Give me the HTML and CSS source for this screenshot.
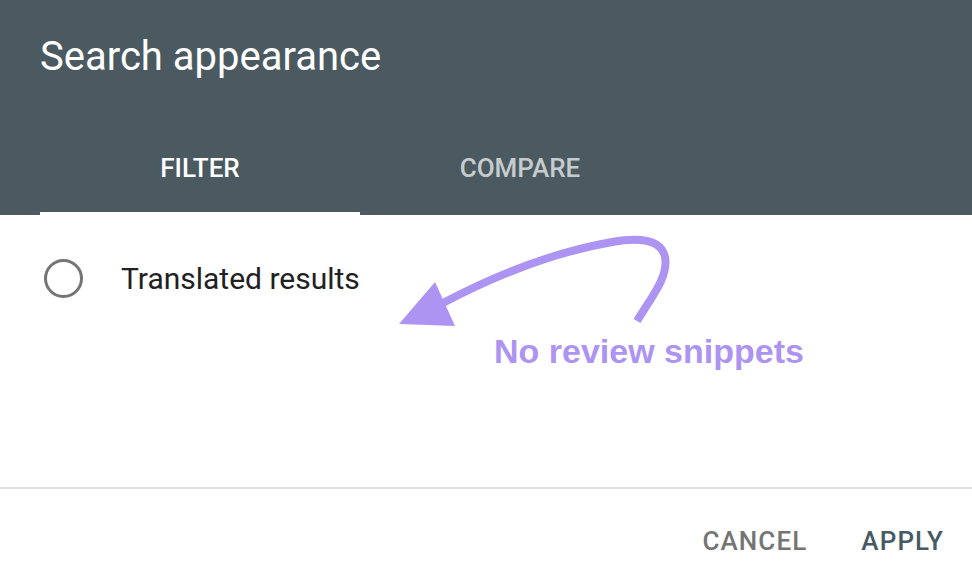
FILE: index.html
```html
<!DOCTYPE html>
<html lang="en">
<head>
    <meta charset="UTF-8">
    <meta name="viewport" content="width=device-width, initial-scale=1.0">
    <title>Search appearance</title>
    <link rel="stylesheet" href="styles.css">
</head>
<body>
    <div class="dialog">
        <div class="dialog-header">
            <div class="dialog-title">Search appearance</div>
            <div class="tabs">
                <div class="tab active">FILTER</div>
                <div class="tab">COMPARE</div>
            </div>
        </div>

        <div class="dialog-body">
            <label class="option">
                <span class="radio"></span>
                <span class="option-label">Translated results</span>
            </label>

            <!-- annotation drawn over the dialog -->
            <svg class="note-arrow" width="972" height="271" viewBox="0 216 972 271">
                <path d="M637 322 C 650 300, 669 278, 665 258 C 661 240, 640 238, 612 243 C 560 252, 500 274, 443 304"
                      fill="none" stroke="#ae94f2" stroke-width="8"/>
                <polygon points="399,325 435,283 455,327" fill="#ae94f2"/>
            </svg>
            <div class="note-text">No review snippets</div>
        </div>

        <div class="dialog-footer">
            <button class="btn btn-cancel">CANCEL</button>
            <button class="btn btn-apply">APPLY</button>
        </div>
    </div>
</body>
</html>
```

FILE: styles.css
```css
body {
    margin: 0;
    padding: 0;
    background-color: #fff;
    font-family: Roboto, "Liberation Sans", Arial, sans-serif;
}

.dialog {
    width: 972px;
    height: 586px;
    background: #fff;
}

.dialog-header {
    height: 215px;
    background-color: #4b5a61;
    padding: 0 40px;
    box-sizing: border-box;
    color: #fff;
}

.dialog-title {
    padding-top: 37px;
    font-size: 40px;
    line-height: 40px;
    font-weight: 400;
}

.tabs {
    display: flex;
}

.tab {
    width: 320px;
    padding-top: 78px;
    padding-bottom: 31px;
    border-bottom: 3px solid transparent;
    text-align: center;
    font-size: 26px;
    line-height: 26px;
    font-weight: 500;
    color: rgba(255, 255, 255, 0.7);
}

.tab.active {
    color: #fff;
    border-bottom-color: #fff;
}

.dialog-body {
    position: relative;
    height: 272px;
    padding: 44px 0 0 44px;
    box-sizing: border-box;
}

.option {
    display: flex;
    align-items: center;
    gap: 38px;
    cursor: pointer;
}

.radio {
    width: 39px;
    height: 39px;
    box-sizing: border-box;
    border: 3px solid #757575;
    border-radius: 50%;
}

.option-label {
    font-size: 30px;
    line-height: 30px;
    color: #212121;
}

.note-arrow {
    position: absolute;
    left: 0;
    top: 0;
}

.note-text {
    position: absolute;
    left: 494px;
    top: 119px;
    font-family: "Liberation Sans", Arial, sans-serif;
    font-weight: bold;
    font-size: 34px;
    line-height: 34px;
    color: #ae94f2;
}

.dialog-footer {
    border-top: 2px solid #e0e0e0;
    display: flex;
    justify-content: flex-end;
    padding-top: 39px;
}

.btn {
    background: none;
    border: none;
    padding: 0 28px 0 26px;
    font-family: Roboto, "Liberation Sans", Arial, sans-serif;
    font-size: 26px;
    line-height: 26px;
    font-weight: 500;
    letter-spacing: 1.1px;
    cursor: pointer;
}

.btn-cancel {
    color: #757575;
}

.btn-apply {
    color: #455a64;
}
```
